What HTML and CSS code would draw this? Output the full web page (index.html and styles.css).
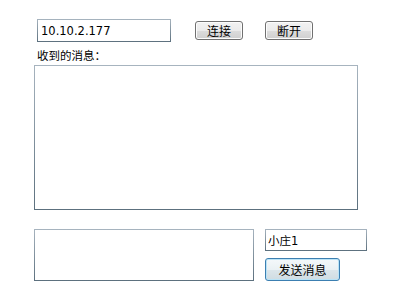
FILE: index.html
```html
<!DOCTYPE html>
<html>
<head>
    <title>聊天客户端</title>
    <link rel="stylesheet" href="styles.css">
</head>
<body>
    <div class="window">
        <!-- Connection Bar -->
        <div class="connect-row">
            <input type="text" class="textbox ip-box" value="10.10.2.177">
            <button class="button connect-button">连接</button>
            <button class="button disconnect-button">断开</button>
        </div>

        <!-- Received Messages -->
        <div class="label">收到的消息：</div>
        <textarea class="textbox received-box"></textarea>

        <!-- Send Area -->
        <div class="send-row">
            <textarea class="textbox message-box"></textarea>
            <div class="send-side">
                <input type="text" class="textbox name-box" value="小庄1">
                <button class="button send-button">发送消息</button>
            </div>
        </div>
    </div>
</body>
</html>
```

FILE: styles.css
```css
body {
    font-family: "DejaVu Sans", "Noto Sans CJK SC", sans-serif;
    font-size: 12px;
    color: #000;
    background-color: #fff;
    margin: 0;
}

.window {
    padding: 19px 0 0 34px;
}

/* Text boxes */
.textbox {
    box-sizing: border-box;
    font-family: "DejaVu Sans", "Noto Sans CJK SC", sans-serif;
    font-size: 11.5px;
    color: #000;
    background-color: #fff;
    border: 1px solid;
    border-image: linear-gradient(#a7b4bf, #5c707e) 1;
    margin: 0;
    padding: 0 3px;
    outline: none;
    resize: none;
}

.ip-box {
    width: 134px;
    height: 23px;
}

.received-box {
    display: block;
    width: 324px;
    height: 145px;
}

.message-box {
    display: block;
    width: 220px;
    height: 52px;
}

.name-box {
    width: 102px;
    height: 22px;
    padding-left: 2px;
}

/* Buttons */
.button {
    box-sizing: border-box;
    font-family: "Noto Sans CJK SC", sans-serif;
    font-size: 12px;
    color: #000;
    border: 1px solid #707070;
    border-radius: 3px;
    background: linear-gradient(#f2f2f2 0%, #ebebeb 50%, #dddddd 50%, #cfcfcf 100%);
    box-shadow: inset 0 0 0 1px #fcfcfc;
    padding: 0;
    line-height: 1;
    cursor: pointer;
}

.connect-row {
    display: flex;
    align-items: flex-start;
    padding-left: 3px;
}

.connect-button {
    width: 48px;
    height: 19px;
    margin: 2px 0 0 24px;
}

.disconnect-button {
    width: 48px;
    height: 19px;
    margin: 2px 0 0 22px;
}

.label {
    font-family: "Noto Sans CJK SC", sans-serif;
    font-size: 11.5px;
    line-height: 14px;
    margin: 6px 0 3px 3px;
}

.send-row {
    display: flex;
    align-items: flex-start;
    margin-top: 19px;
}

.send-side {
    display: flex;
    flex-direction: column;
    align-items: flex-start;
    gap: 7px;
    margin-left: 11px;
}

.send-button {
    width: 75px;
    height: 23px;
    border-color: #3c7fb1;
    box-shadow: inset 0 0 0 1px #b9e3f7;
    background: linear-gradient(#f4f8fa 0%, #eaf1f4 50%, #dce6eb 50%, #d0dce2 100%);
}
```
